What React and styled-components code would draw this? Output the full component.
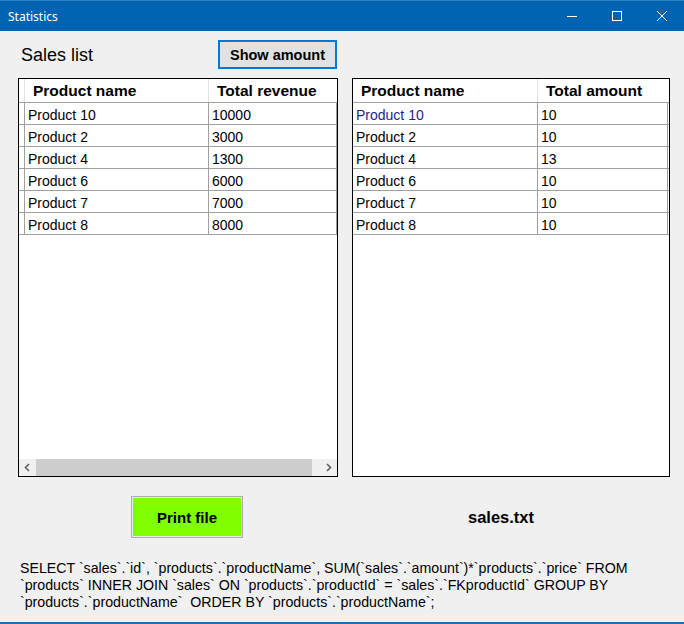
import React from 'react';
import styled, { createGlobalStyle } from 'styled-components';

const GlobalStyle = createGlobalStyle`
    html, body {
        margin: 0;
        padding: 0;
        background: #F0F0F0;
    }
    #root {
        width: 684px;
        height: 624px;
    }
`;

const salesRows = [
    ['Product 10', '10000'],
    ['Product 2', '3000'],
    ['Product 4', '1300'],
    ['Product 6', '6000'],
    ['Product 7', '7000'],
    ['Product 8', '8000'],
];

const amountRows = [
    ['Product 10', '10'],
    ['Product 2', '10'],
    ['Product 4', '13'],
    ['Product 6', '10'],
    ['Product 7', '10'],
    ['Product 8', '10'],
];

const sqlLines = [
    "SELECT `sales`.`id`, `products`.`productName`, SUM(`sales`.`amount`)*`products`.`price` FROM",
    "`products` INNER JOIN `sales` ON `products`.`productId` = `sales`.`FKproductId` GROUP BY",
    "`products`.`productName`  ORDER BY `products`.`productName`;",
];

function WindowControls(){
    return (
        <SCControls>
            <SCControl>
                <svg width="10" height="10" viewBox="0 0 10 10"><path d="M0 5.5h10" stroke="#fff" strokeWidth="1" /></svg>
            </SCControl>
            <SCControl>
                <svg width="10" height="10" viewBox="0 0 10 10"><rect x="0.5" y="0.5" width="9" height="9" fill="none" stroke="#fff" strokeWidth="1" /></svg>
            </SCControl>
            <SCControl>
                <svg width="10" height="10" viewBox="0 0 10 10"><path d="M0 0L10 10M10 0L0 10" stroke="#fff" strokeWidth="1" /></svg>
            </SCControl>
        </SCControls>
    );
}

function DataGrid({ columns, headers, rows, rowHeader, highlightFirst, scrollbar }){
    return (
        <SCGrid>
            <SCRow columns={columns} header>
                {rowHeader && <SCRowHead header />}
                {headers.map((h) => <SCHeadCell key={h}>{h}</SCHeadCell>)}
            </SCRow>
            {rows.map((r, i) => (
                <SCRow key={r[0]} columns={columns}>
                    {rowHeader && <SCRowHead />}
                    <SCCell highlight={highlightFirst && i === 0}>{r[0]}</SCCell>
                    <SCCell>{r[1]}</SCCell>
                </SCRow>
            ))}
            <SCFiller />
            {scrollbar && (
                <SCScrollbar>
                    <SCArrow>
                        <svg width="7" height="9" viewBox="0 0 7 9"><path d="M5 1L1.5 4.5L5 8" stroke="#606060" strokeWidth="1.6" fill="none" /></svg>
                    </SCArrow>
                    <SCTrack><SCThumb /></SCTrack>
                    <SCArrow>
                        <svg width="7" height="9" viewBox="0 0 7 9"><path d="M2 1L5.5 4.5L2 8" stroke="#606060" strokeWidth="1.6" fill="none" /></svg>
                    </SCArrow>
                </SCScrollbar>
            )}
        </SCGrid>
    );
}

export default function App(){
    return (
        <SCWindow>
            <GlobalStyle />
            <SCTitleBar>
                <SCTitle>Statistics</SCTitle>
                <WindowControls />
            </SCTitleBar>
            <SCBody>
                <SCColumns>
                    <SCTopRow>
                        <SCLabel>Sales list</SCLabel>
                        <SCShowButton>Show amount</SCShowButton>
                    </SCTopRow>
                    <div />
                    <DataGrid
                        columns="6px 184px 128px"
                        headers={['Product name', 'Total revenue']}
                        rows={salesRows}
                        rowHeader
                        scrollbar
                    />
                    <DataGrid
                        columns="185px 130px"
                        headers={['Product name', 'Total amount']}
                        rows={amountRows}
                        highlightFirst
                    />
                    <SCBottomCell pad={113}>
                        <SCPrintButton>Print file</SCPrintButton>
                    </SCBottomCell>
                    <SCBottomCell pad={116}>
                        <SCFileName>sales.txt</SCFileName>
                    </SCBottomCell>
                </SCColumns>
                <SCSql>
                    {sqlLines.map((l) => <div key={l}>{l}</div>)}
                </SCSql>
            </SCBody>
        </SCWindow>
    );
}

const SCWindow = styled.div`
    width: 684px;
    height: 624px;
    box-sizing: border-box;
    display: flex;
    flex-direction: column;
    background: #F0F0F0;
    border-bottom: 2px solid #1E6BB0;
    overflow: hidden;
`;

const SCTitleBar = styled.div`
    height: 31px;
    flex-shrink: 0;
    display: flex;
    align-items: center;
    justify-content: space-between;
    background: #0063B1;
    border-top: 1px solid #2F7FC4;
    box-sizing: border-box;
    padding-left: 8px;
`;

const SCTitle = styled.span`
    color: #FFFFFF;
    font-family: 'Segoe UI', 'Noto Sans', sans-serif;
    font-size: 12px;
`;

const SCControls = styled.div`
    display: flex;
    height: 100%;
`;

const SCControl = styled.div`
    width: 45px;
    height: 100%;
    display: flex;
    align-items: center;
    justify-content: center;
`;

const SCBody = styled.div`
    padding: 9px 0 0 18px;
    font-family: 'Liberation Sans', Arial, sans-serif;
    color: #000000;
`;

const SCColumns = styled.div`
    display: grid;
    grid-template-columns: 320px 318px;
    column-gap: 14px;
    grid-template-rows: 29px 399px 52px;
    row-gap: 9px;
`;

const SCTopRow = styled.div`
    display: flex;
    align-items: center;
    justify-content: space-between;
    padding-left: 3px;
    padding-right: 1px;
`;

const SCLabel = styled.span`
    font-size: 18px;
    padding-top: 1px;
`;

const SCShowButton = styled.button`
    width: 119px;
    height: 29px;
    box-sizing: border-box;
    background: #E1E1E1;
    border: 2px solid #0078D7;
    font-family: 'Liberation Sans', Arial, sans-serif;
    font-weight: bold;
    font-size: 14.5px;
    color: #000;
    padding: 0;
`;

const SCGrid = styled.div`
    display: flex;
    flex-direction: column;
    border: 1px solid #000000;
    background: #FFFFFF;
    box-sizing: border-box;
    height: 399px;
`;

const SCRow = styled.div`
    display: grid;
    grid-template-columns: ${(p) => p.columns};
    height: ${(p) => (p.header ? '24px' : '22px')};
    box-sizing: border-box;
    border-bottom: 1px solid #A0A0A0;
`;

const SCRowHead = styled.div`
    border-right: 1px solid ${(p) => (p.header ? '#E3E3E3' : '#A0A0A0')};
`;

const SCHeadCell = styled.div`
    display: flex;
    align-items: center;
    padding: 1px 0 0 8px;
    font-weight: bold;
    font-size: 15.5px;
    border-right: 1px solid #E3E3E3;
    &:last-child { border-right: 0; }
`;

const SCCell = styled.div`
    display: flex;
    align-items: center;
    padding: 2px 0 0 3px;
    font-size: 14px;
    color: ${(p) => (p.highlight ? '#1E1E8C' : '#000000')};
    border-right: 1px solid #A0A0A0;
`;

const SCFiller = styled.div`
    flex: 1;
`;

const SCScrollbar = styled.div`
    height: 17px;
    display: flex;
    background: #F0F0F0;
`;

const SCArrow = styled.div`
    width: 17px;
    display: flex;
    align-items: center;
    justify-content: center;
`;

const SCTrack = styled.div`
    flex: 1;
    display: flex;
`;

const SCThumb = styled.div`
    width: 276px;
    background: #CDCDCD;
`;

const SCBottomCell = styled.div`
    display: flex;
    align-items: center;
    box-sizing: border-box;
    padding-top: 10px;
    padding-left: ${(p) => p.pad}px;
`;

const SCPrintButton = styled.button`
    width: 112px;
    height: 42px;
    box-sizing: border-box;
    background: #80FF00;
    border: 1px solid #ADADAD;
    box-shadow: inset 0 0 0 1px #E8E8E8;
    font-family: 'Liberation Sans', Arial, sans-serif;
    font-weight: bold;
    font-size: 15px;
    color: #000;
    padding: 0;
`;

const SCFileName = styled.span`
    font-weight: bold;
    font-size: 16.5px;
`;

const SCSql = styled.div`
    margin-top: 22px;
    margin-left: 2px;
    font-size: 14.2px;
    line-height: 17px;
    white-space: pre;
`;
